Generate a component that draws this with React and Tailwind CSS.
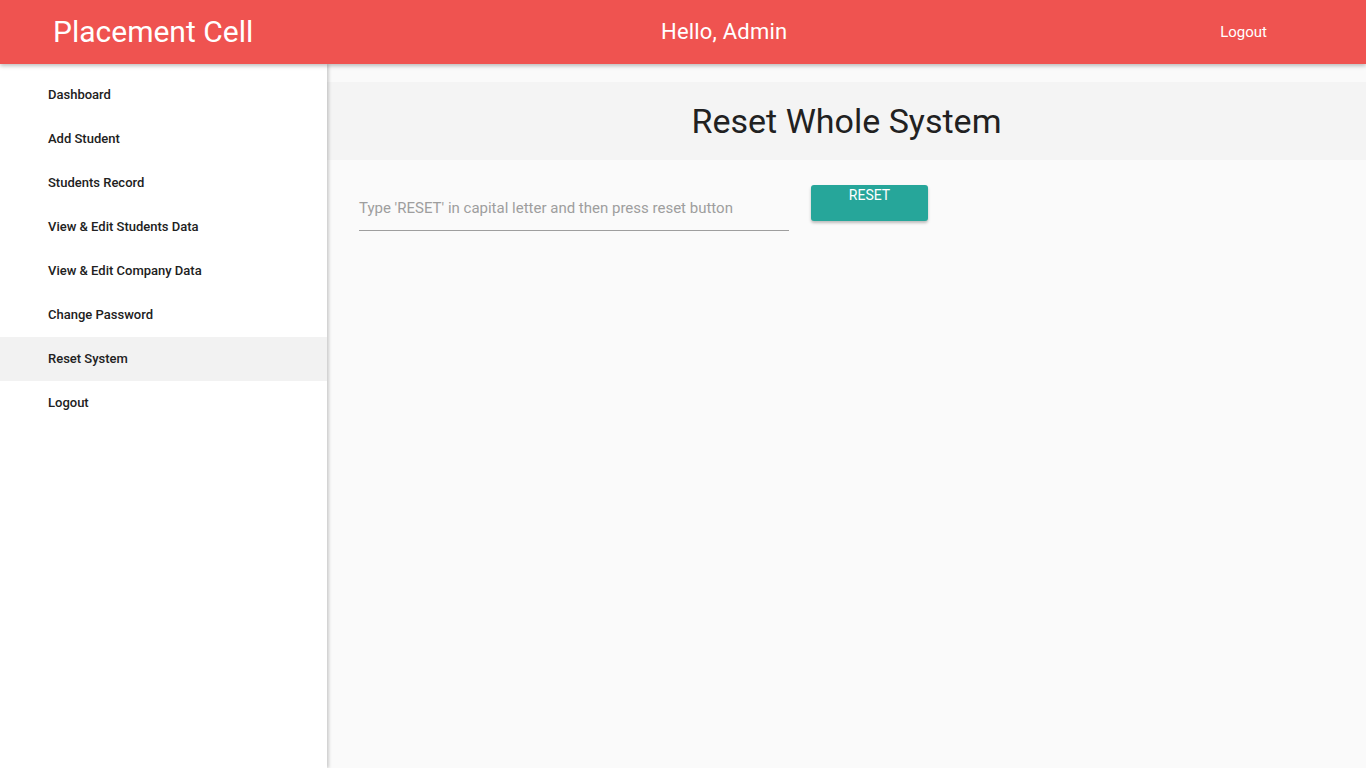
import React from 'react';

const links = [
  'Dashboard',
  'Add Student',
  'Students Record',
  'View & Edit Students Data',
  'View & Edit Company Data',
  'Change Password',
  'Reset System',
  'Logout',
];

export default function App() {
  const active = 'Reset System';

  return (
    <div className="h-screen w-full flex flex-col bg-[#fafafa] overflow-hidden font-['Roboto',sans-serif] text-[#212121]">
      {/* Top nav */}
      <header className="h-16 shrink-0 bg-[#ef5350] flex items-center text-white relative z-20 shadow-[0_2px_4px_rgba(0,0,0,0.25)]">
        <div className="w-[53px]" />
        <div className="text-[30px] leading-none w-[450px]">Placement Cell</div>
        <div className="text-[22px] leading-none w-[130px] ml-[158px] whitespace-nowrap tracking-[0.2px]">Hello, Admin</div>
        <div className="flex-1" />
        <div className="text-[15px] mr-[99px]">Logout</div>
      </header>

      <div className="flex-1 flex min-h-0">
        {/* Sidebar */}
        <aside className="w-[327px] shrink-0 bg-white pt-[9px] relative z-10 shadow-[2px_0_3px_rgba(0,0,0,0.18)]">
          {links.map((l) => (
            <div
              key={l}
              className={`h-11 flex items-center pl-12 text-[13px] font-medium text-[#212121] ${
                l === active ? 'bg-[#f2f2f2]' : ''
              }`}
            >
              {l}
            </div>
          ))}
        </aside>

        {/* Main */}
        <main className="flex-1 pt-[18px]">
          <div className="h-[78px] bg-[#f4f4f4] flex items-center justify-center">
            <h1 className="text-[34px] text-[#212121] leading-none">Reset Whole System</h1>
          </div>

          <div className="flex items-start pl-[32px] pt-[25px]">
            <div className="w-[430px] border-b border-[#9e9e9e] pt-[12px] pb-[10px] text-[15px] text-[#9e9e9e]">
              Type 'RESET' in capital letter and then press reset button
            </div>
            <button className="ml-[22px] w-[117px] h-9 bg-[#26a69a] text-white text-[14px] rounded-[3px] flex justify-center pt-0 shadow-[0_2px_3px_rgba(0,0,0,0.25)]">
              RESET
            </button>
          </div>
        </main>
      </div>
    </div>
  );
}
